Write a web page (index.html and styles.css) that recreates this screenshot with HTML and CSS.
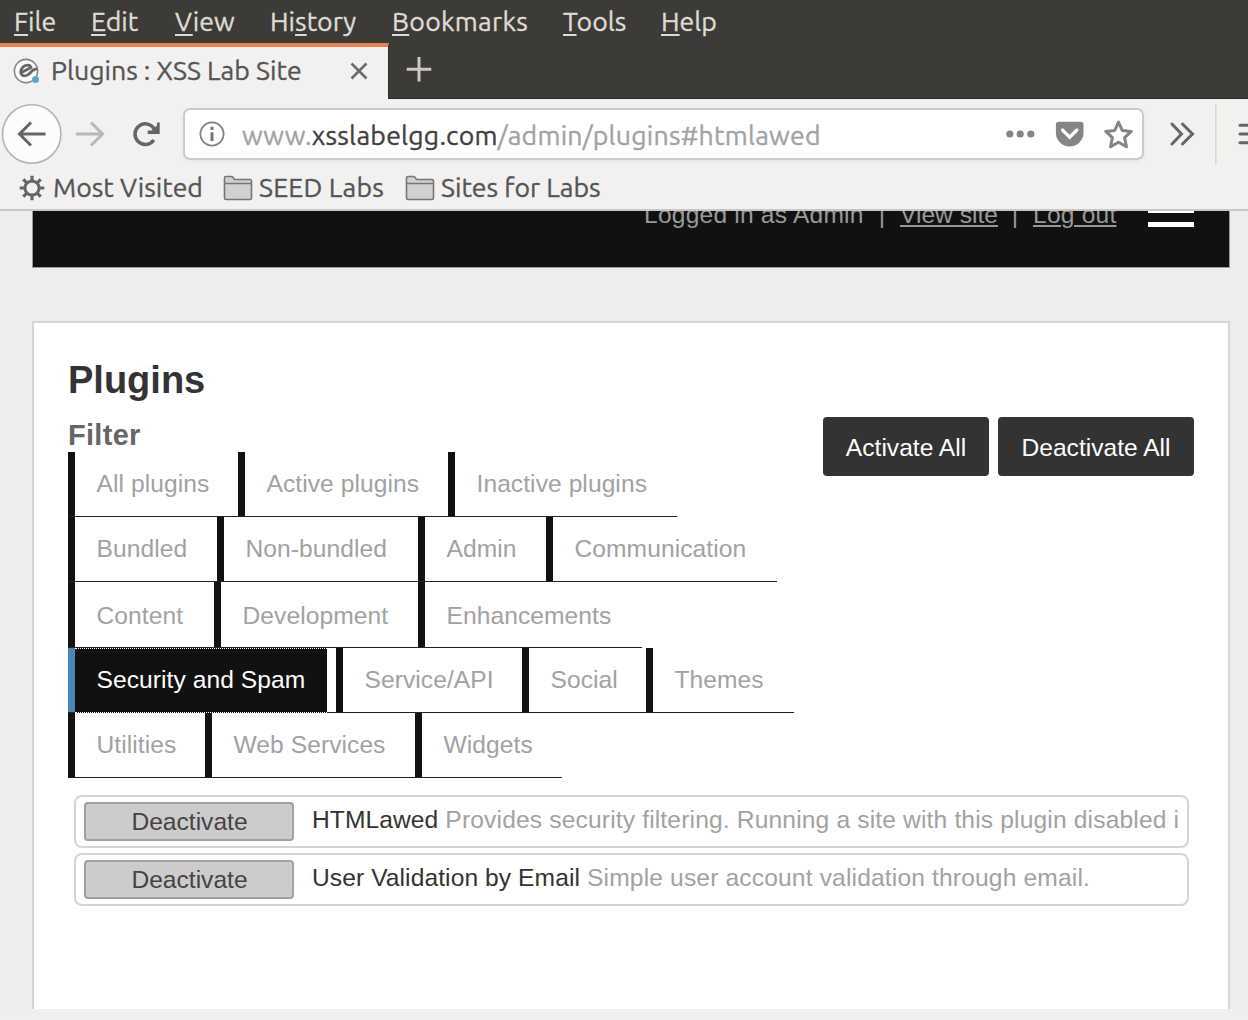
FILE: index.html
```html
<!DOCTYPE html>
<html lang="en">
<head>
<meta charset="utf-8">
<title>Plugins : XSS Lab Site</title>
<link rel="stylesheet" href="styles.css">
</head>
<body>
<div class="window">
  <nav class="menubar">
    <span class="menu-file"><u>F</u>ile</span>
    <span class="menu-edit"><u>E</u>dit</span>
    <span class="menu-view"><u>V</u>iew</span>
    <span class="menu-history">Hi<u>s</u>tory</span>
    <span class="menu-bookmarks"><u>B</u>ookmarks</span>
    <span class="menu-tools"><u>T</u>ools</span>
    <span class="menu-help"><u>H</u>elp</span>
  </nav>

  <div class="tabstrip">
    <div class="tab">
      <svg class="favicon" width="28" height="28" viewBox="0 0 28 28" fill="none">
        <circle cx="13" cy="14" r="11.6" fill="#fafafa" stroke="#858585" stroke-width="1.6"/>
        <path d="M8 15.800 18 10.500C16.500 6.500 10.500 8 8.500 12C6.500 16.500 9 20 13.500 18.500C16.500 17.500 17.500 15.500 19.500 13.500L24 11.500" stroke="#666" stroke-width="2.800"/>
        <circle cx="22.5" cy="22.5" r="3.5" fill="#58a9c6"/>
      </svg>
      <span class="tab-title">Plugins : XSS Lab Site</span>
      <svg class="tab-close" width="18" height="18" viewBox="0 0 18 18"><path d="M1.5 1.5 16.5 16.5M16.5 1.5 1.5 16.5" stroke="#6b6a68" stroke-width="2.6"/></svg>
    </div>
    <svg class="tab-new" width="26" height="26" viewBox="0 0 26 26"><path d="M13 1v24.5M.7 13.2h24.6" stroke="#cdc9bf" stroke-width="3"/></svg>
  </div>

  <div class="toolbar">
    <svg class="nav-buttons" width="183" height="69" viewBox="0 0 183 69" fill="none">
      <circle cx="31.7" cy="35" r="29.2" fill="#fcfcfc" stroke="#b4b3b1" stroke-width="1.6"/>
      <path d="M45.5 35H20M31 23.5 19.5 35 31 46.500" stroke="#656565" stroke-width="3"/>
      <path d="M76 35h26M91 23.500 102.500 35 91 46.500" stroke="#b9b8b6" stroke-width="3"/>
      <path d="M153.800 41A10.300 10.300 0 1 1 154.500 30.500" stroke="#656565" stroke-width="3.500"/>
      <path d="M157 23.500h2.700V35h-12V31.500h4l5.300-5z" fill="#656565"/>
    </svg>
    <div class="urlbar">
      <svg class="info" width="26" height="26" viewBox="0 0 26 26"><circle cx="13" cy="13" r="11.600" fill="none" stroke="#808080" stroke-width="1.800"/><path d="M13 5.800v3.200M13 11.300v8.700" stroke="#777" stroke-width="3"/></svg>
      <span class="url"><span class="url-sub">www.</span><span class="url-host">xsslabelgg.com</span><span class="url-path">/admin/plugins#htmlawed</span></span>
      <svg class="page-actions" width="128" height="32" viewBox="0 0 128 32">
        <g fill="#858585"><circle cx="4.800" cy="16" r="3.600"/><circle cx="15.200" cy="16" r="3.600"/><circle cx="25.800" cy="16" r="3.600"/>
        <path d="M54 3.700h22q2.500 0 2.500 2.500v8.500a13.800 13.800 0 0 1-27.600 0V6.200q0-2.500 3.100-2.500z"/></g>
        <path d="m57.500 12 7.200 7.200 7.200-7.200" fill="none" stroke="#fff" stroke-width="3.200" stroke-linecap="round"/>
        <path d="m113.500 4 3.700 8.400 9.100 1-6.700 6.300 1.900 9.100-8-4.600-8 4.600 1.900-9.100-6.700-6.300 9.100-1z" fill="none" stroke="#858585" stroke-width="3" stroke-linejoin="round"/>
      </svg>
    </div>
    <svg class="overflow" width="104" height="69" viewBox="0 0 104 69" fill="none">
      <path d="M28 25 37.500 35 28 45M38.500 25 48.500 35 38.500 45" stroke="#656565" stroke-width="3" stroke-linecap="round"/>
      <path d="M71.800 5v60" stroke="#d7d6d4" stroke-width="1.500"/>
      <path d="M96 26.200h12M96 35h12M96 43.700h12" stroke="#656565" stroke-width="3" stroke-linecap="round"/>
    </svg>
  </div>

  <div class="bookmarks">
    <svg class="gear" width="26" height="26" viewBox="-13 -13 26 26">
      <circle r="7.100" fill="none" stroke="#656565" stroke-width="3"/>
      <path d="M0-12.300V-8M0 12.300V8M-12.300 0H-8M12.300 0H8M-8.700-8.700-5.700-5.700M8.700 8.700 5.700 5.700M-8.700 8.700-5.700 5.700M8.700-8.700 5.700-5.700" stroke="#656565" stroke-width="3.200"/>
    </svg>
    <span class="bm-most">Most Visited</span>
    <svg class="folder" width="30" height="26" viewBox="0 0 30 26"><path d="M1.500 23V3Q1.500 1.500 3 1.500H8.500Q10 1.500 11.500 4.500H27Q28.500 4.500 28.500 6V23Q28.500 24.500 27 24.500H3Q1.500 24.500 1.500 23zM1.500 8.500H28.500" fill="#d2d1cf" stroke="#777674" stroke-width="1.600"/></svg>
    <span class="bm-seed">SEED Labs</span>
    <svg class="folder" width="30" height="26" viewBox="0 0 30 26"><path d="M1.500 23V3Q1.500 1.500 3 1.500H8.500Q10 1.500 11.500 4.500H27Q28.500 4.500 28.500 6V23Q28.500 24.500 27 24.500H3Q1.500 24.500 1.500 23zM1.500 8.500H28.500" fill="#d2d1cf" stroke="#777674" stroke-width="1.600"/></svg>
    <span class="bm-sites">Sites for Labs</span>
  </div>

  <main class="page">
    <header class="site-header">
      <span class="login">Logged in as Admin</span><span class="sep">|</span><a class="view-site">View site</a><span class="sep">|</span><a class="log-out">Log out</a>
      <span class="hamburger"></span>
    </header>
    <section class="panel">
      <h1>Plugins</h1>
      <div class="controls">
        <div class="filter">
          <h2>Filter</h2>
          <ul class="row row-status"><li>All plugins</li><li>Active plugins</li><li>Inactive plugins</li></ul>
          <ul class="row row-origin"><li>Bundled</li><li>Non-bundled</li><li>Admin</li><li>Communication</li></ul>
          <ul class="row row-content"><li>Content</li><li>Development</li><li>Enhancements</li></ul>
          <ul class="row row-security"><li class="selected"><span>Security and Spam</span></li><li>Service/API</li><li>Social</li><li>Themes</li></ul>
          <ul class="row row-utilities"><li>Utilities</li><li>Web Services</li><li>Widgets</li></ul>
        </div>
        <div class="actions"><button class="activate">Activate All</button><button class="deactivate">Deactivate All</button></div>
      </div>
      <div class="plugins">
        <div class="plugin"><button>Deactivate</button><p><b>HTMLawed</b> Provides security filtering. Running a site with this plugin disabled i</p></div>
        <div class="plugin"><button>Deactivate</button><p><b>User Validation by Email</b> Simple user account validation through email.</p></div>
      </div>
    </section>
  </main>
</div>
</body>
</html>
```

FILE: styles.css
```css
* { box-sizing: border-box; }
body { margin: 0; background: #efefef; }
svg { display: block; flex: none; }
h1, h2, p, ul { margin: 0; padding: 0; }
button { border: 0; padding: 0; font: inherit; }

.window {
  width: 1248px;
  height: 1020px;
  overflow: hidden;
  font-family: Ubuntu, "Noto Sans", sans-serif;
  font-size: 26.670px;
  white-space: nowrap;
}
.menubar, .tab-title, .url, .bookmarks span { -webkit-text-stroke: .35px currentColor; }

.menubar {
  display: grid;
  grid-template-columns: 77px 84px 95px 122px 171px 98px 80px;
  height: 43px;
  padding: 0 0 1px 14px;
  background: #3c3b37;
  color: #dfdbd2;
  line-height: 42px;
}
.menubar u { text-decoration-thickness: 2px; text-underline-offset: 3px; }
.menu-bookmarks { letter-spacing: .3px; }

.tabstrip { display: flex; height: 56px; background: #3c3b37; border-bottom: 1px solid #2d2c29; }
.tab {
  display: flex;
  align-items: center;
  width: 389px;
  height: 56px;
  border-top: 4px solid #ef7f50;
  border-right: 1px solid #2d2c29;
  background: #f2f1f0;
  color: #555;
  padding: 0 0 5px 13px;
}
.tab-title { width: 297px; margin: -2px 0 0 10px; }
.tab-close { margin-left: 2px; }
.tab-new { margin: 13px 0 0 17px; }

.toolbar { display: flex; height: 69px; background: #f2f1f0; }
.urlbar {
  display: flex;
  align-items: center;
  width: 961px;
  height: 52px;
  margin-top: 9px;
  padding-left: 14px;
  border: 2px solid #cccbc9;
  border-radius: 7px;
  background: #fff;
  box-shadow: 0 2px 4px #0000000c;
}
.url { width: 763px; margin: 1px 0 0 17px; color: #a2a2a2; letter-spacing: .230px; }
.url-host { color: #404040; }

.bookmarks {
  display: flex;
  align-items: center;
  height: 43px;
  padding: 0 0 2px 19px;
  border-bottom: 2px solid #c8c7c5;
  background: #f2f1f0;
  color: #555;
}
.bookmarks span { margin: -1px 0 0 8px; }
.bm-most { width: 170px; }
.bm-seed { width: 146px; letter-spacing: .2px; }
.bookmarks .bm-seed, .bookmarks .bm-sites { margin-left: 6px; }

.page {
  height: 798px;
  padding: 0 18px 0 32px;
  overflow: hidden;
  background: #ededed;
  font-family: "Liberation Sans", Arial, sans-serif;
  font-size: 24.600px;
  color: #a2a2a2;
}
.site-header {
  display: flex;
  height: 57px;
  padding-left: 611px;
  border: solid #999;
  border-width: 0 1px 1px 1px;
  background: #111;
  color: #999;
  line-height: 28px;
}
.site-header > span, .site-header > a { margin-top: -10px; }
.site-header a { text-decoration: underline; text-decoration-thickness: 2px; text-underline-offset: 2px; }
.login { width: 220px; letter-spacing: .2px; }
.sep { width: 36px; text-align: center; }
.view-site { width: 97px; }
.log-out { width: 84px; letter-spacing: .2px; }
.site-header .hamburger {
  width: 46px;
  height: 26px;
  margin: -10px 0 0 31px;
  border: solid #fff;
  border-width: 0 0 5px;
  background: linear-gradient(#fff, #fff) 0 7px / 46px 5px no-repeat;
}

.panel { height: 760px; margin-top: 53px; border: 2px solid #d6d6d6; background: #fff; padding: 33px 34px 0 34px; }
h1 { height: 61px; font-size: 38px; line-height: 48px; color: #333; }
.controls { display: flex; justify-content: space-between; height: 378px; }
h2 { height: 35px; font-size: 29px; line-height: 36px; letter-spacing: .3px; color: #666; }
.row { display: grid; width: max-content; height: 65px; list-style: none; border-bottom: 1.500px solid #222; letter-spacing: .060px; }
.row li { height: 64px; border-left: 7px solid #111; padding-left: 21.500px; line-height: 64px; }
.row-status { grid-template-columns: 170px 210px 229px; }
.row-origin { grid-template-columns: 149px 201px 128px 231px; }
.row-content { grid-template-columns: 146px 204px 224px; height: 66px; }
.row-content li { height: 65px; padding-top: 2px; }
.row-security { grid-template-columns: 268px 186px 124px 148px; }
.row-security .selected { border-left-color: #4787b8; }
.selected span { display: block; width: 252px; height: 65px; margin-left: -21.500px; padding-left: 21.500px; background: #111; color: #fff; border: dotted #fff; border-width: 1px 0; line-height: 62px; }
.row-utilities { grid-template-columns: 137px 210px 147px; }

.actions { display: flex; gap: 9px; margin-top: 0; }
.actions button { height: 59px; border-radius: 4px; background: #333; color: #fff; line-height: 61px; }
.activate { width: 166px; }
.deactivate { width: 196px; }

.plugins { display: grid; gap: 5px; margin: 0 5px 0 6px; }
.plugin { display: flex; height: 53px; padding: 5px 0 0 8px; border: 2px solid #d5d5d5; border-radius: 8px; }
.plugin button { width: 210px; height: 39px; padding-left: 1px; border: 2px solid #a2a2a2; border-radius: 4px; background: #ccc; color: #444; }
.plugin p { margin-left: 18px; line-height: 36px; letter-spacing: .150px; }
.plugin b { font-weight: normal; color: #333; letter-spacing: .080px; }
```
